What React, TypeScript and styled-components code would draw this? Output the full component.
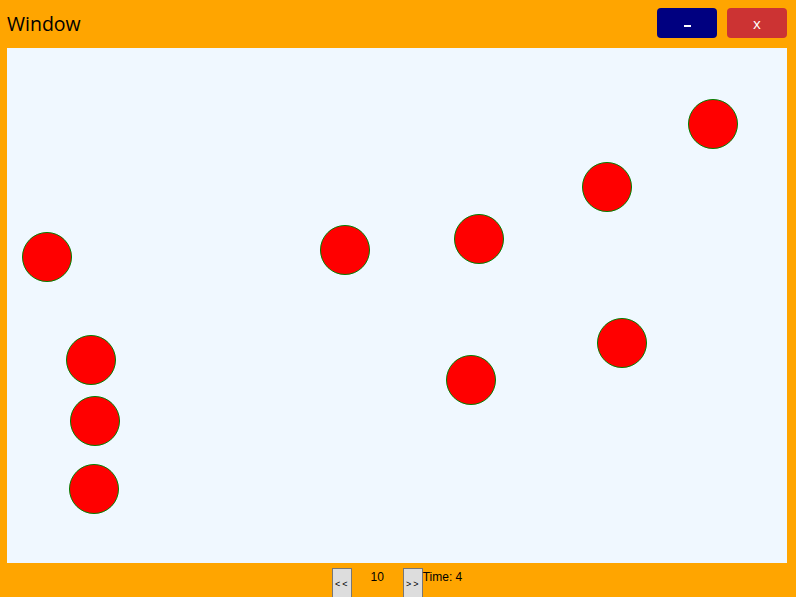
import React from "react";
import styled, { createGlobalStyle } from "styled-components";

const Global = createGlobalStyle`
  html, body { margin: 0; padding: 0; background: #ffa500; }
  body { font-family: "Open Sans", "Noto Sans", sans-serif; }
`;

const Frame = styled.div`
  width: 796px;
  height: 597px;
  background: #ffa500;
  display: flex;
  flex-direction: column;
  overflow: hidden;
`;

const TitleBar = styled.div`
  flex-shrink: 0;
  height: 48px;
  display: flex;
  align-items: center;
  padding: 0 9px 0 7px;
  box-sizing: border-box;
`;

const Title = styled.div`
  flex: 1;
  font-size: 19.5px;
  color: #000;
  line-height: 1;
  margin-top: -1px;
`;

const Controls = styled.div`
  display: flex;
  gap: 10px;
  margin-top: -2px;
`;

const WinButton = styled.button<{ $bg: string }>`
  width: 60px;
  height: 30px;
  border: none;
  border-radius: 4px;
  background: ${(p) => p.$bg};
  color: #fff;
  font-family: "Open Sans", "Noto Sans", sans-serif;
  font-size: 15px;
  font-weight: 500;
  padding: 0;
  display: flex;
  align-items: center;
  justify-content: center;
`;

const Dash = styled.span`
  display: block;
  width: 7px;
  height: 2px;
  margin-top: 6px;
  background: #fff;
`;

const Canvas = styled.div`
  flex-shrink: 0;
  margin: 0 9px 0 7px;
  height: 515px;
  background: #f0f8ff;
  & > svg { display: block; }
`;

const Footer = styled.div`
  flex-shrink: 0;
  display: flex;
  justify-content: center;
  align-items: flex-start;
  padding: 5px 2px 0 0;
  font-family: "Liberation Sans", Arial, sans-serif;
  font-size: 12px;
  color: #000;
`;

const StepButton = styled.button`
  width: 20px;
  height: 31px;
  box-sizing: border-box;
  border: 1px solid #777;
  background: #dddddd;
  padding: 1px 0 0 1px;
  font-family: "Liberation Sans", Arial, sans-serif;
  font-size: 9px;
  color: #000;
  letter-spacing: 2px;
  text-align: center;
`;

const Count = styled.span`
  width: 51px;
  text-align: center;
  padding-top: 2px;
`;

const TimeLabel = styled.span`
  padding-top: 2px;
`;

const balls = [
  [47, 257],
  [345, 250],
  [479, 239],
  [607, 187],
  [713, 124],
  [91, 360],
  [95, 421],
  [94, 489],
  [471, 380],
  [622, 343],
];

export default function App() {
  return (
    <>
      <Global />
      <Frame>
        <TitleBar>
          <Title>Window</Title>
          <Controls>
            <WinButton $bg="#000080" aria-label="minimize">
              <Dash />
            </WinButton>
            <WinButton $bg="#cc3333">x</WinButton>
          </Controls>
        </TitleBar>
        <Canvas>
          <svg width="780" height="515" viewBox="0 0 780 515">
            {balls.map(([x, y], i) => (
              <circle
                key={i}
                cx={x - 7}
                cy={y - 48}
                r={24.5}
                fill="#ff0000"
                stroke="#008000"
                strokeWidth={1}
              />
            ))}
          </svg>
        </Canvas>
        <Footer>
          <StepButton>&lt;&lt;</StepButton>
          <Count>10</Count>
          <StepButton>&gt;&gt;</StepButton>
          <TimeLabel>Time: 4</TimeLabel>
        </Footer>
      </Frame>
    </>
  );
}
